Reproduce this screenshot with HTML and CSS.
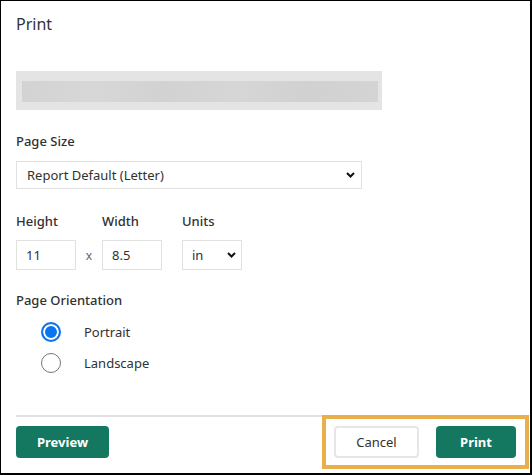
FILE: index.html
```html
<!DOCTYPE html>
<html lang="en">
<head>
<meta charset="utf-8">
<title>Print</title>
<link rel="stylesheet" href="styles.css">
</head>
<body>
<div class="dialog">
  <h1 class="title">Print</h1>
  <div class="redacted"><div class="redacted-bar"></div></div>

  <label class="label section">Page Size</label>
  <div class="select page-size">
    <span>Report Default (Letter)</span>
    <svg class="chevron" width="9" height="6" viewBox="0 0 9 6"><path d="M1 1l3.5 3.5L8 1" fill="none" stroke="#111" stroke-width="2"/></svg>
  </div>

  <div class="dims">
    <label class="label">Height</label>
    <span></span>
    <label class="label">Width</label>
    <span></span>
    <label class="label">Units</label>
    <div class="input">11</div>
    <span class="times">x</span>
    <div class="input">8.5</div>
    <span></span>
    <div class="select units">
      <span>in</span>
      <svg class="chevron" width="9" height="6" viewBox="0 0 9 6"><path d="M1 1l3.5 3.5L8 1" fill="none" stroke="#111" stroke-width="2"/></svg>
    </div>
  </div>

  <label class="label orient">Page Orientation</label>
  <div class="radios">
    <div class="radio-row"><span class="radio checked"></span><span class="radio-label">Portrait</span></div>
    <div class="radio-row"><span class="radio"></span><span class="radio-label">Landscape</span></div>
  </div>

  <div class="divider"></div>
  <div class="footer">
    <button class="btn primary preview">Preview</button>
    <div class="actions">
      <button class="btn secondary cancel">Cancel</button>
      <button class="btn primary print">Print</button>
    </div>
  </div>

  <div class="highlight"></div>
</div>
</body>
</html>
```

FILE: styles.css
```css
html, body {
  margin: 0;
  padding: 0;
  background: #fff;
}

body {
  width: 532px;
  height: 475px;
  font-family: "Noto Sans", "Open Sans", sans-serif;
  color: #323130;
}

.dialog {
  box-sizing: border-box;
  width: 532px;
  height: 475px;
  border-style: solid;
  border-color: #000;
  border-width: 1px 2px 2px 1px;
  padding: 0 14px 0 15px;
  position: relative;
  display: flex;
  flex-direction: column;
  align-items: flex-start;
}

.title {
  margin: 11px 0 0;
  font-size: 16px;
  font-weight: 400;
  line-height: 24px;
  color: #333;
}

.redacted {
  box-sizing: border-box;
  margin-top: 35px;
  width: 366px;
  height: 39px;
  padding: 10px 4px 8px 6px;
  background: #e4e4e4;
}

.redacted-bar {
  height: 21px;
  background: linear-gradient(90deg, #d3d3d3 0%, #d7d7d7 20%, #d2d2d2 40%, #d6d6d6 60%, #d1d1d1 80%, #d4d4d4 100%);
}

.label {
  display: block;
  font-size: 13px;
  font-weight: 500;
  line-height: 20px;
  color: #323130;
}

.section {
  margin-top: 21px;
}

.select {
  box-sizing: border-box;
  display: flex;
  align-items: center;
  justify-content: space-between;
  border: 1px solid #e1e1e1;
  font-size: 13px;
  background: #fff;
}

.page-size {
  margin-top: 10px;
  width: 346px;
  height: 28px;
  padding: 0 6px 0 10px;
}

.dims {
  margin-top: 22px;
  display: grid;
  grid-template-columns: 60px 26px 60px 20px 60px;
  grid-template-rows: 20px 30px;
  row-gap: 9px;
}

.input {
  box-sizing: border-box;
  height: 30px;
  border: 1px solid #e1e1e1;
  padding: 0 9px;
  display: flex;
  align-items: center;
  font-size: 13px;
}

.times {
  display: flex;
  align-items: center;
  justify-content: center;
  font-size: 12px;
  color: #666;
}

.units {
  height: 30px;
  padding: 0 5px 0 9px;
}

.orient {
  margin-top: 20px;
}

.radios {
  margin-top: 6px;
  display: flex;
  flex-direction: column;
}

.radio-row {
  height: 31px;
  display: flex;
  align-items: center;
  padding-left: 25px;
}

.radio {
  box-sizing: border-box;
  width: 20px;
  height: 20px;
  border-radius: 50%;
  border: 1px solid #767676;
  background: #fff;
}

.radio.checked {
  border: 2px solid #0b74ef;
  box-shadow: inset 0 0 0 2px #fff;
  background: #0b74ef;
}

.radio-label {
  margin-left: 23px;
  font-size: 13px;
}

.divider {
  margin-top: 37px;
  align-self: stretch;
  height: 2px;
  background: #e1e1e1;
}

.footer {
  margin-top: 9px;
  align-self: stretch;
  display: flex;
  justify-content: space-between;
}

.actions {
  display: flex;
  gap: 17px;
}

.btn {
  box-sizing: border-box;
  height: 32px;
  border-radius: 4px;
  font-family: "Noto Sans", "Open Sans", sans-serif;
  font-size: 13px;
  padding: 0;
  cursor: pointer;
}

.primary {
  background: #14775f;
  border: none;
  color: #fff;
  font-weight: 700;
}

.secondary {
  background: #fff;
  border: 2px solid #e6e6e6;
  color: #323130;
  font-weight: 400;
}

.preview { width: 93px; }
.cancel { width: 85px; }
.print { width: 80px; }

.highlight {
  position: absolute;
  left: 321px;
  top: 414px;
  width: 207px;
  height: 54px;
  box-sizing: border-box;
  border: 4px solid #e9af4a;
  pointer-events: none;
}
```
